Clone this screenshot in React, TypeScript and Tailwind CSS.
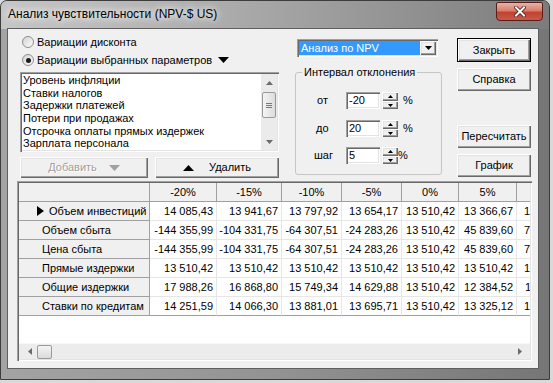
import React from 'react';

type Dir = 'up' | 'down' | 'left' | 'right';

const Tri: React.FC<{ dir: Dir; w: number; h: number; color?: string }> = ({ dir, w, h, color = '#000' }) => {
  const pts = {
    up: `0,${h} ${w / 2},0 ${w},${h}`,
    down: `0,0 ${w},0 ${w / 2},${h}`,
    left: `${w},0 0,${h / 2} ${w},${h}`,
    right: `0,0 ${w},${h / 2} 0,${h}`,
  }[dir];
  return (
    <svg width={w} height={h} viewBox={`0 0 ${w} ${h}`} className="block shrink-0">
      <polygon points={pts} fill={color} />
    </svg>
  );
};

const raised =
  'bg-[#f0f0f0] shadow-[inset_1px_1px_0_#ffffff,inset_-1px_-1px_0_#696969,inset_-2px_-2px_0_#a0a0a0,inset_2px_2px_0_#e3e3e3]';
const sunken =
  'bg-white p-[2px] shadow-[inset_1px_1px_0_#a0a0a0,inset_2px_2px_0_#696969,inset_-1px_-1px_0_#ffffff,inset_-2px_-2px_0_#e3e3e3]';

const Btn: React.FC<{ children: React.ReactNode; className?: string; def?: boolean }> = ({ children, className = '', def }) => (
  <div className={`${raised} flex items-center justify-center ${def ? 'border border-black' : ''} ${className}`}>{children}</div>
);

const Radio: React.FC<{ checked?: boolean; label: React.ReactNode }> = ({ checked, label }) => (
  <div className="flex items-center h-[18px] pl-[2px]">
    <div className="w-[12px] h-[12px] rounded-full border border-[#8e8f8f] bg-[linear-gradient(135deg,#d4d4d4,#fbfbfb)] flex items-center justify-center">
      {checked && <div className="w-[5px] h-[5px] rounded-full bg-[#1b1b1b]" />}
    </div>
    <div className="ml-[3px] flex items-center">{label}</div>
  </div>
);

const Spin: React.FC = () => (
  <div className="flex flex-col w-[16px] h-[17px] ml-[2px]">
    <div className={`${raised} h-[9px] flex items-center justify-center`}>
      <Tri dir="up" w={5} h={3} />
    </div>
    <div className={`${raised} h-[8px] flex items-center justify-center`}>
      <Tri dir="down" w={5} h={3} />
    </div>
  </div>
);

const Field: React.FC<{ label: string; value: string; labelPad: string; pctGap: string; className?: string }> = ({
  label,
  value,
  labelPad,
  pctGap,
  className = '',
}) => (
  <div className={`flex items-center h-[17px] ${className}`}>
    <div className={`w-[50px] ${labelPad}`}>{label}</div>
    <div className={`${sunken} w-[34px] h-[17px] flex items-center pl-[3px]`}>{value}</div>
    <Spin />
    <div className={pctGap}>%</div>
  </div>
);

const params = [
  'Уровень инфляции',
  'Ставки налогов',
  'Задержки платежей',
  'Потери при продажах',
  'Отсрочка оплаты прямых издержек',
  'Зарплата персонала',
];

const headers = ['-20%', '-15%', '-10%', '-5%', '0%', '5%', '10%'];
const colW = ['w-[67px]', 'w-[65px]', 'w-[60px]', 'w-[60px]', 'w-[57px]', 'w-[58px]', 'w-[60px]'];

const rows: { name: string; vals: string[] }[] = [
  { name: 'Объем инвестиций', vals: ['14 085,43', '13 941,67', '13 797,92', '13 654,17', '13 510,42', '13 366,67', '13 222,92'] },
  { name: 'Объем сбыта', vals: ['-144 355,99', '-104 331,75', '-64 307,51', '-24 283,26', '13 510,42', '45 839,60', '78 168,78'] },
  { name: 'Цена сбыта', vals: ['-144 355,99', '-104 331,75', '-64 307,51', '-24 283,26', '13 510,42', '45 839,60', '78 168,78'] },
  { name: 'Прямые издержки', vals: ['13 510,42', '13 510,42', '13 510,42', '13 510,42', '13 510,42', '13 510,42', '13 510,42'] },
  { name: 'Общие издержки', vals: ['17 988,26', '16 868,80', '15 749,34', '14 629,88', '13 510,42', '12 384,52', '11 258,62'] },
  { name: 'Ставки по кредитам', vals: ['14 251,59', '14 066,30', '13 881,01', '13 695,71', '13 510,42', '13 325,12', '13 139,83'] },
];

const App: React.FC = () => {
  return (
    <div className="w-[553px] h-[383px] bg-[#d9d9d9] overflow-hidden font-['Liberation_Sans',Arial,sans-serif] text-[11px] leading-none text-black">
      <div className="w-[550px] h-[380px] flex flex-col rounded-t-[7px] border border-[#3c3c3c] bg-[linear-gradient(90deg,#a3a3a3_0%,#939393_50%,#767676_100%)]">
        {/* title bar */}
        <div className="h-[28px] flex items-start shrink-0 rounded-t-[6px] bg-[linear-gradient(90deg,#c6c6c6_0%,#b0b0b0_35%,#959595_70%,#7c7c7c_100%)]">
          <div className="pl-[7px] pt-[7px] text-[12px] [text-shadow:0_0_6px_#ffffff,0_0_10px_#ffffff]">
            Анализ чувствительности (NPV-$ US)
          </div>
          <div className="ml-auto mr-[6px] mt-[1px] w-[47px] h-[19px] rounded-b-[4px] rounded-t-[2px] border border-[#5a1e18] bg-[linear-gradient(180deg,#e9b1a5_0%,#d77f6e_45%,#c0442f_55%,#c9584a_100%)] flex items-center justify-center">
            <svg width="12" height="11" viewBox="0 0 12 11">
              <path d="M2 1.5 L10 9.5 M10 1.5 L2 9.5" stroke="#4a1a14" strokeWidth="3.6" strokeLinecap="square" />
              <path d="M2 1.5 L10 9.5 M10 1.5 L2 9.5" stroke="#ffffff" strokeWidth="2" strokeLinecap="square" />
            </svg>
          </div>
        </div>

        {/* client area */}
        <div className="flex-1 ml-[7px] mr-[11px] mb-[11px] bg-[#f0f0f0] flex flex-col shadow-[0_0_0_1px_#5f5f5f]">
          <div className="flex h-[149px] shrink-0">
            {/* left column */}
            <div className="ml-[12px] w-[259px] pt-[4px] flex flex-col">
              <Radio label="Вариации дисконта" />
              <Radio
                checked
                label={
                  <>
                    <span>Вариации выбранных параметров</span>
                    <span className="ml-[6px]">
                      <Tri dir="down" w={11} h={6} />
                    </span>
                  </>
                }
              />
              <div className={`${sunken} mt-[3px] h-[80px] flex`}>
                <div className="flex-1 flex flex-col pl-[1px]">
                  {params.map(p => (
                    <div key={p} className="h-[13px] flex items-center whitespace-nowrap">
                      {p}
                    </div>
                  ))}
                </div>
                <div className="w-[16px] bg-[#ebebeb] flex flex-col items-center">
                  <div className="h-[17px] flex items-center justify-center">
                    <Tri dir="up" w={7} h={4} color="#6b6b6b" />
                  </div>
                  <div className="mt-[1px] w-[14px] h-[26px] rounded-[2px] border border-[#9a9a9a] bg-[linear-gradient(90deg,#f4f4f4,#dcdcdc)] flex flex-col items-center justify-center gap-[1px]">
                    <div className="w-[6px] h-[1px] bg-[#7a7a7a]" />
                    <div className="w-[6px] h-[1px] bg-[#7a7a7a]" />
                    <div className="w-[6px] h-[1px] bg-[#7a7a7a]" />
                  </div>
                  <div className="flex-1" />
                  <div className="h-[17px] flex items-center justify-center">
                    <Tri dir="down" w={7} h={4} color="#6b6b6b" />
                  </div>
                </div>
              </div>
              <div className="mt-[5px] flex h-[21px]">
                <Btn className="w-[128px] text-[#a0a0a0] gap-[12px]">
                  <span className="[text-shadow:1px_1px_0_#ffffff]">Добавить</span>
                  <Tri dir="down" w={11} h={6} color="#a0a0a0" />
                </Btn>
                <Btn className="ml-[7px] w-[124px] gap-[15px]">
                  <Tri dir="up" w={11} h={6} />
                  <span>Удалить</span>
                </Btn>
              </div>
            </div>

            {/* middle column */}
            <div className="ml-[16px] w-[147px] flex flex-col">
              <div className={`${sunken} ml-[2px] mt-[10px] w-[141px] h-[18px] flex`}>
                <div className="flex-1 bg-[#3399ff] text-white flex items-center pl-[2px]">Анализ по NPV</div>
                <div className={`${raised} w-[16px] flex items-center justify-center`}>
                  <Tri dir="down" w={7} h={4} />
                </div>
              </div>
              <fieldset className="mt-[9px] h-[109px] border border-[#c5c5c5] rounded-[3px] px-0">
                <legend className="ml-[6px] px-[2px] h-[13px] leading-[13px]">Интервал отклонения</legend>
                <Field className="mt-[13px]" label="от" value="-20" labelPad="pl-[21px]" pctGap="ml-[5px]" />
                <Field className="mt-[11px]" label="до" value="20" labelPad="pl-[20px]" pctGap="ml-[5px]" />
                <Field className="mt-[10px]" label="шаг" value="5" labelPad="pl-[18px]" pctGap="ml-[0px]" />
              </fieldset>
            </div>

            {/* right column */}
            <div className="ml-[15px] w-[74px] flex flex-col">
              <Btn def className="mt-[9px] h-[24px]">Закрыть</Btn>
              <Btn className="mt-[6px] h-[23px]">Справка</Btn>
              <Btn className="mt-[34px] h-[23px]">Пересчитать</Btn>
              <Btn className="mt-[6px] h-[23px]">График</Btn>
            </div>
          </div>

          {/* grid */}
          <div className={`${sunken} ml-[9px] mt-[3px] w-[515px] h-[180px] flex flex-col overflow-hidden`}>
            <div className="flex-1 overflow-hidden flex flex-col">
              <div className="flex h-[19px] shrink-0">
                <div className="w-[131px] shrink-0 bg-[#f0f0f0] border-r border-b border-[#a0a0a0]" />
                {headers.map((h, i) => (
                  <div
                    key={h}
                    className={`${colW[i]} shrink-0 bg-[#f0f0f0] border-r border-b border-[#a0a0a0] flex items-center justify-center`}
                  >
                    {h}
                  </div>
                ))}
              </div>
              {rows.map((r, ri) => (
                <div key={r.name} className="flex h-[19px] shrink-0">
                  <div className="w-[131px] shrink-0 bg-[#f0f0f0] border-r border-b border-[#a0a0a0] flex items-center">
                    {ri === 0 ? (
                      <>
                        <span className="ml-[18px]">
                          <Tri dir="right" w={7} h={10} />
                        </span>
                        <span className="ml-[5px] whitespace-nowrap">{r.name}</span>
                      </>
                    ) : (
                      <span className="ml-[23px] whitespace-nowrap">{r.name}</span>
                    )}
                  </div>
                  {r.vals.map((v, i) => (
                    <div
                      key={i}
                      className={`${colW[i]} shrink-0 bg-white border-r border-b ${
                        ri === rows.length - 1 ? 'border-b-[#a0a0a0]' : 'border-b-[#e6e6e6]'
                      } border-r-[#e6e6e6] flex items-center justify-end pr-[3px] whitespace-nowrap`}
                    >
                      {v}
                    </div>
                  ))}
                </div>
              ))}
              <div className="flex-1 bg-white" />
            </div>
            <div className="h-[16px] shrink-0 bg-[#ececec] border-t border-[#f7f7f7] flex items-center">
              <div className="w-[16px] flex justify-center ml-[3px]">
                <Tri dir="left" w={4} h={7} color="#6b6b6b" />
              </div>
              <div className="ml-[-1px] w-[15px] h-[14px] rounded-[2px] border border-[#9a9a9a] bg-[linear-gradient(180deg,#f4f4f4,#dadada)]" />
              <div className="flex-1" />
              <div className="w-[16px] flex justify-center mr-[2px]">
                <Tri dir="right" w={4} h={7} color="#6b6b6b" />
              </div>
            </div>
          </div>
        </div>
      </div>
    </div>
  );
};

export default App;
